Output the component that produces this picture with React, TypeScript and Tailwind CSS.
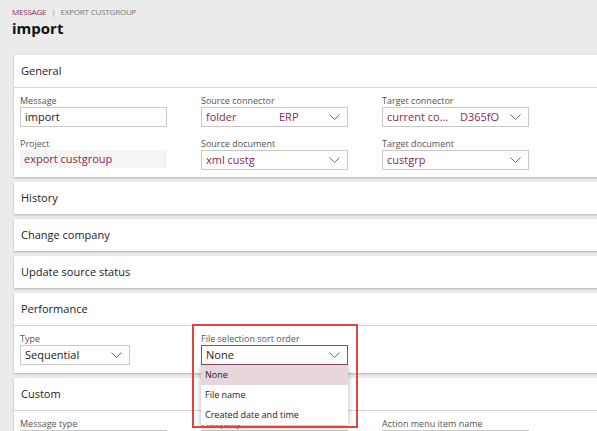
import React from 'react';

const font = { fontFamily: '"Segoe UI", "Open Sans", "Noto Sans", sans-serif' };

const Chevron = () => (
  <svg width="11" height="7" viewBox="0 0 11 7" className="shrink-0">
    <polyline points="0.5,0.5 5.5,5.5 10.5,0.5" fill="none" stroke="#6b6b6b" strokeWidth="1" />
  </svg>
);

const Field = ({ label, children }: { label: string; children: React.ReactNode }) => (
  <div className="flex flex-col w-[147px]">
    <div className="text-[9px] text-[#555] leading-[11px] mb-[1px] whitespace-nowrap">{label}</div>
    {children}
  </div>
);

const Input = ({ value }: { value: string }) => (
  <div className="h-[20px] border border-[#c8c8c8] bg-white px-[4px] flex items-center text-[11px] text-[#222]">{value}</div>
);

const Select = ({ value, extra }: { value: string; extra?: string }) => (
  <div className="h-[20px] border border-[#c8c8c8] bg-white pl-[4px] pr-[7px] flex items-center text-[11px] text-[#8a2a4f]">
    <span className="w-[73px] truncate">{value}</span>
    <span className="flex-1">{extra}</span>
    <Chevron />
  </div>
);

const Collapsed = ({ title }: { title: string }) => (
  <div className="bg-white h-[32px] flex items-center px-[7px] text-[11px] font-medium text-[#222] shadow-[0_1px_2px_rgba(0,0,0,0.25)]">
    {title}
  </div>
);

const CardHeader = ({ title }: { title: string }) => (
  <div className="h-[33px] flex items-center px-[7px] text-[11px] font-medium text-[#222] border-b border-[#d4d4d4]">{title}</div>
);

export default function App() {
  return (
    <div style={font} className="w-[597px] h-[431px] overflow-hidden bg-[#ebebeb] relative">
      <div className="pl-[12px] pt-[7px]">
        <div className="flex items-center gap-[5px] text-[8px] leading-[10px] tracking-tight">
          <span className="text-[#8a2a4f]">MESSAGE</span>
          <span className="text-[#999]">|</span>
          <span className="text-[#777]">EXPORT CUSTGROUP</span>
        </div>
        <div className="text-[15px] font-bold text-[#111] leading-[20px] mt-[1px]">import</div>
      </div>

      <div className="ml-[14px] mt-[17px] w-[600px] flex flex-col gap-[5px]">
        <div className="bg-white shadow-[0_1px_2px_rgba(0,0,0,0.25)]">
          <CardHeader title="General" />
          <div className="pl-[6px] pt-[7px] pb-[7px] flex gap-[34px]">
            <div className="flex flex-col gap-[11px]">
              <Field label="Message"><Input value="import" /></Field>
              <Field label="Project">
                <div className="h-[18px] bg-[#f4f4f4] px-[4px] flex items-center text-[11px] text-[#8a2a4f]">export custgroup</div>
              </Field>
            </div>
            <div className="flex flex-col gap-[11px]">
              <Field label="Source connector"><Select value="folder" extra="ERP" /></Field>
              <Field label="Source document"><Select value="xml custg" /></Field>
            </div>
            <div className="flex flex-col gap-[11px]">
              <Field label="Target connector"><Select value="current co..." extra="D365fO" /></Field>
              <Field label="Target document"><Select value="custgrp" /></Field>
            </div>
          </div>
        </div>

        <Collapsed title="History" />
        <Collapsed title="Change company" />
        <Collapsed title="Update source status" />

        <div className="bg-white shadow-[0_1px_2px_rgba(0,0,0,0.25)] relative z-10">
          <CardHeader title="Performance" />
          <div className="pl-[6px] pt-[7px] pb-[8px] flex gap-[34px]">
            <div className="w-[110px]">
              <div className="text-[9px] text-[#555] leading-[11px] mb-[1px]">Type</div>
              <div className="h-[20px] border border-[#c8c8c8] bg-white pl-[4px] pr-[7px] flex items-center justify-between text-[11px] text-[#222]">
                <span>Sequential</span>
                <Chevron />
              </div>
            </div>
            <div className="relative ml-[37px]">
              <Field label="File selection sort order">
                <div className="h-[20px] border border-[#8a4a64] bg-white pl-[4px] pr-[7px] flex items-center justify-between text-[11px] text-[#222]">
                  <span>None</span>
                  <Chevron />
                </div>
              </Field>
              <div className="absolute left-0 top-[32px] w-[147px] bg-white shadow-[0_2px_6px_rgba(0,0,0,0.3)] text-[9px] text-[#222]">
                <div className="h-[20px] flex items-center px-[4px] bg-[#e8d6dd]">None</div>
                <div className="h-[20px] flex items-center px-[4px]">File name</div>
                <div className="h-[20px] flex items-center px-[4px]">Created date and time</div>
              </div>
              <div className="absolute left-[-9px] top-[-9px] w-[166px] h-[104px] border-2 border-[#e0443e] pointer-events-none" />
            </div>
          </div>
        </div>

        <div className="bg-white shadow-[0_1px_2px_rgba(0,0,0,0.25)]">
          <CardHeader title="Custom" />
          <div className="pl-[6px] pt-[7px] pb-[9px] flex gap-[34px]">
            <Field label="Message type"><Input value="" /></Field>
            <Field label="Company"><Input value="" /></Field>
            <Field label="Action menu item name"><Input value="" /></Field>
          </div>
        </div>
      </div>
    </div>
  );
}
